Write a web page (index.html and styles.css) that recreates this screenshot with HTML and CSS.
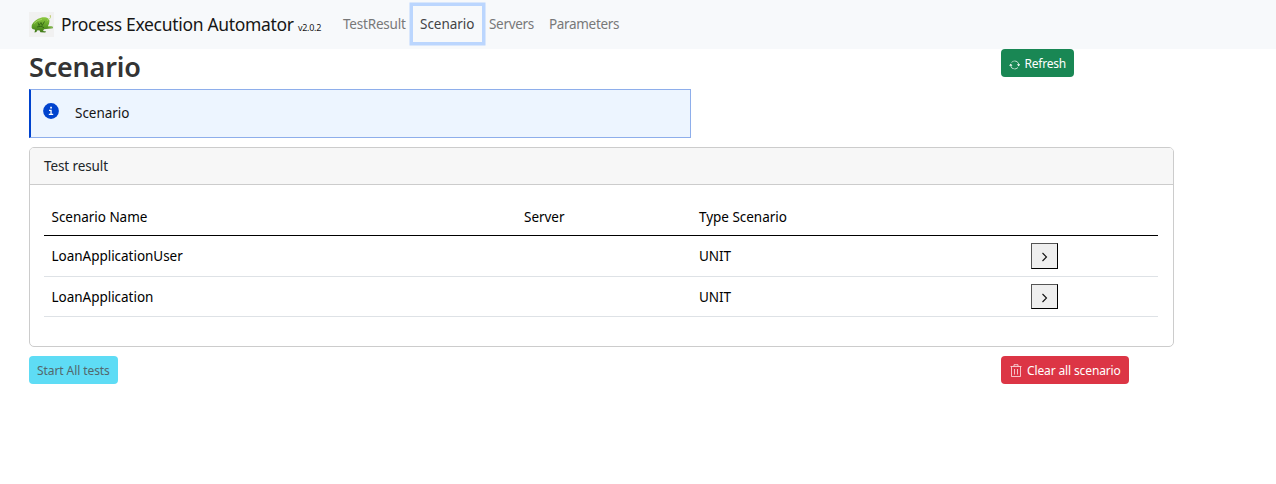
FILE: index.html
```html
<!DOCTYPE html>
<html lang="en">
<head>
<meta charset="utf-8">
<title>Process Execution Automator</title>
<link rel="stylesheet" href="styles.css">
</head>
<body>
<header class="navbar">
  <a class="brand">
    <svg class="logo" viewBox="0 0 25 25">
      <defs><linearGradient id="g" x1="0" y1="0" x2="0" y2="1"><stop offset="0" stop-color="#8cc840"/><stop offset=".5" stop-color="#63a428"/><stop offset="1" stop-color="#3f7818"/></linearGradient></defs>
      <path fill="#f1f1f1" d="M0 0h25v25H0z"/>
      <path fill="url(#g)" d="M2.800 13C4.500 9.500 8 6.600 12 5.700c3-.7 5.500-.3 7.500 1l1 2-.5 3-1 2.300 4.500.6.400 1.600-4.500.5-4.400.5-1 1.800 3.200.6-1 1-4.800-.4-1-2-2.400.2-.5 1.700-2 .4.600-2.800-2.600-.7-.9-1.500z"/>
      <path fill="none" stroke="#2c5c12" stroke-width=".8" d="M9 10.500l1 3 2-3 1.200 3 2.300-4M8 15l4-.8 3 1.500"/>
      <path fill="none" stroke="#b0d874" stroke-width=".7" d="M5 11.500q3-3.500 8-4.200M18 8.500l3.500-2.500V3.700M19 14.500l4 .8"/>
      <circle cx="21.300" cy="4" r=".7" fill="#c6bf64"/>
    </svg>
    <span class="brand-name">Process Execution Automator</span>
    <span class="version">v2.0.2</span>
  </a>
  <nav class="links">
    <a class="link l1"><span>TestResult</span></a>
    <a class="link l2 active"><span>Scenario</span></a>
    <a class="link l3"><span>Servers</span></a>
    <a class="link l4"><span>Parameters</span></a>
  </nav>
</header>
<main class="page">
  <div class="top">
    <h1 class="title"><span>Scenario</span></h1>
    <button class="btn refresh">
      <svg width="12" height="12" viewBox="0 0 16 16" fill="currentColor"><path d="M11.534 7h3.932a.25.25 0 0 1 .192.410l-1.966 2.360a.25.25 0 0 1-.384 0l-1.966-2.360a.25.25 0 0 1 .192-.41zm-11 2h3.932a.25.25 0 0 0 .192-.41L2.692 6.230a.25.25 0 0 0-.384 0L.342 8.590A.25.25 0 0 0 .534 9z"/><path d="M8 2c-2 0-3.700.9-4.700 2.200l.7.600C5 3.600 6.400 2.900 8 2.900c2.600 0 4.600 1.800 5.100 4.100h1C13.600 4 11.100 2 8 2zM2 9c.5 3 3 5 6 5 2 0 3.700-.9 4.700-2.200l-.7-.6C11 12.400 9.600 13.100 8 13.100 5.400 13.100 3.400 11.300 3 9z"/></svg>
      <span>Refresh</span>
    </button>
  </div>
  <div class="notice">
    <svg width="16" height="16" viewBox="0 0 16 16"><circle cx="8" cy="8" r="7.900" fill="#0043ce"/><path fill="#fff" d="M7.200 3.700h1.700v1.700H7.200zM6 6.800h2.700v4h1.500v1.100H5.800v-1.100h1.600V7.900H6z"/></svg>
    <span>Scenario</span>
  </div>
  <section class="card">
    <div class="card-head"><span>Test result</span></div>
    <div class="card-body">
      <div class="row head"><span>Scenario Name</span><span>Server</span><span>Type Scenario</span><span></span></div>
      <div class="row"><span>LoanApplicationUser</span><span></span><span>UNIT</span><button class="open"><svg width="7" height="10" viewBox="0 0 7 10"><path d="M1.500 1l4 4-4 4" fill="none" stroke="#111" stroke-width="1.100"/></svg></button></div>
      <div class="row last"><span>LoanApplication</span><span></span><span>UNIT</span><button class="open"><svg width="7" height="10" viewBox="0 0 7 10"><path d="M1.500 1l4 4-4 4" fill="none" stroke="#111" stroke-width="1.100"/></svg></button></div>
    </div>
  </section>
  <div class="actions">
    <button class="btn start"><span>Start All tests</span></button>
    <button class="btn clear">
      <svg width="12" height="13" viewBox="0 0 12 13" fill="none" stroke="currentColor" stroke-opacity=".7"><path d="M.5 2.500h11M4 2.300V.7h4v1.600M1.500 2.700v9.800h9V2.700M4.500 5v5.500M7.500 5v5.500"/></svg>
      <span>Clear all scenario</span>
    </button>
  </div>
</main>
</body>
</html>
```
FILE: styles.css
```css
* { box-sizing: border-box; }
body { margin: 0; background: #fff; color: #212529; font: 13.5px/20px "Noto Sans", "Open Sans", sans-serif; letter-spacing: -.03px; }
span { white-space: nowrap; }
button { font: inherit; letter-spacing: inherit; margin: 0; }
.navbar { display: flex; height: 49px; padding-left: 29px; background: #f7f9fb; align-items: center; }
.brand { display: flex; width: 307px; align-items: center; color: #161616; }
.logo { width: 25px; height: 25px; margin-right: 7px; }
.brand-name { width: 237px; font-size: 17.500px; line-height: 24px; letter-spacing: -.32px; margin-top: -1px; }
.version { font-size: 9px; padding-top: 6px; letter-spacing: -.3px; color: #161616; }
.links { display: flex; margin-bottom: 1px; }
.link { display: block; height: 36px; padding: 8px 7px; color: #777879; }
.l1 { width: 77px; letter-spacing: -.2px; }
.l2 { width: 69px; }
.l3 { width: 60px; letter-spacing: -.3px; }
.l4 { letter-spacing: -.33px; }
.active { color: #434446; box-shadow: 0 0 0 3.500px #bbd6fe; }
.page { width: 1145px; margin-left: 29px; }
.top { display: grid; grid-template-columns: 972px auto; justify-content: start; align-items: start; height: 40px; }
.title { margin: 0; font-size: 27px; line-height: 35px; font-weight: 600; letter-spacing: -.2px; color: #343434; }
.btn { display: flex; align-items: center; height: 28px; border: 0; border-radius: 4px; padding: 1px 8px 0; color: #fff; font-size: 12px; }
.refresh { width: 73px; background: #198754; gap: 4px; letter-spacing: -.2px; }
.refresh svg { margin-top: 3px; }
.notice { display: flex; gap: 16px; width: 662px; height: 49px; padding: 13px 12px; border: 1px solid #8eaeeb; border-left: 2px solid #0043ce; background: #edf5ff; color: #161616; }
.card { height: 200px; margin-top: 9px; border: 1px solid #ccc; border-radius: 5px; overflow: hidden; }
.card-head { height: 37px; padding: 8px 14px; background: #f7f7f7; border-bottom: 1px solid #ccc; letter-spacing: -.1px; }
.card-body { padding: 15px 15px 0 14px; color: #000; }
.row { display: grid; grid-template-columns: 472.500px 175px 332px auto; justify-content: start; align-items: center; height: 41px; padding-left: 7.500px; border-bottom: 1px solid #dee2e6; }
.head { height: 36px; padding-bottom: 2px; border-color: #000; }
.last { height: 40px; }
.open { display: flex; align-items: center; justify-content: center; width: 27px; height: 26px; padding: 2px 1px 0 0; border: 1px solid; border-color: #555 #000 #000 #555; background: #efefef; }
.last .open { height: 25px; }
.actions { display: grid; grid-template-columns: 972px auto; justify-content: start; margin-top: 9px; }
.start { width: 89px; background: #5edcf5; color: #53686d; letter-spacing: -.08px; }
.clear { width: 128px; background: #dc3545; gap: 5px; letter-spacing: -.13px; padding-left: 9px; }
```
